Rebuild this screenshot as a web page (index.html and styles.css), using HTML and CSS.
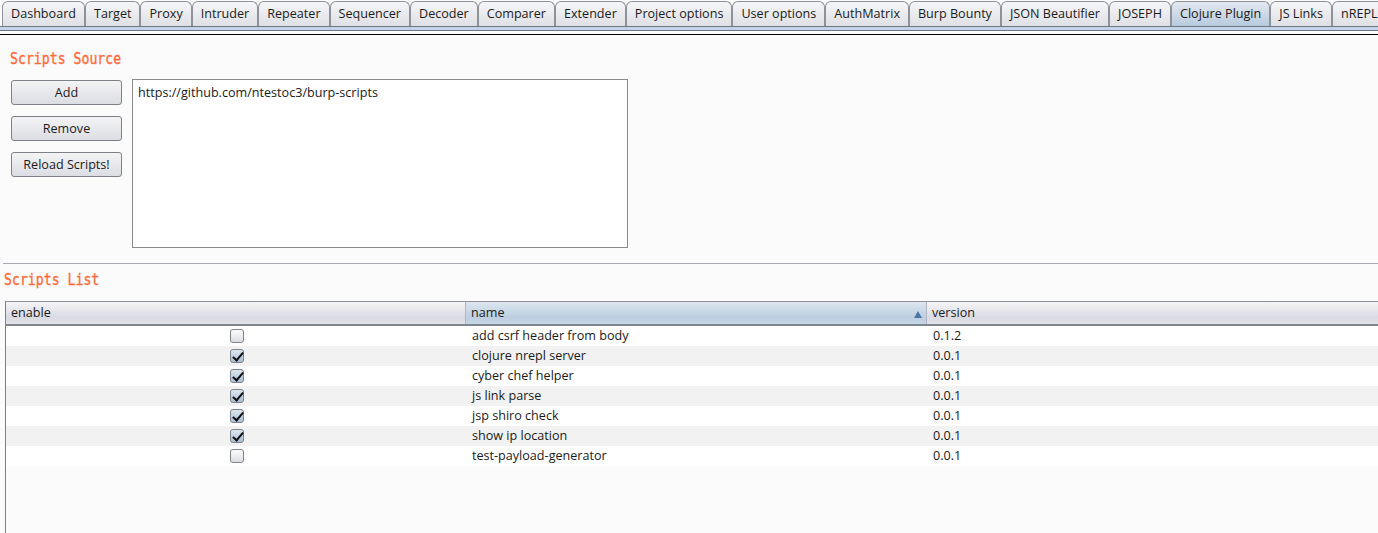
FILE: index.html
```html
<!DOCTYPE html>
<html>
<head>
<meta charset="utf-8">
<link rel="stylesheet" href="styles.css">
</head>
<body>
<div class="tabs">
  <div class="tab">Dashboard</div>
  <div class="tab">Target</div>
  <div class="tab">Proxy</div>
  <div class="tab">Intruder</div>
  <div class="tab">Repeater</div>
  <div class="tab">Sequencer</div>
  <div class="tab">Decoder</div>
  <div class="tab">Comparer</div>
  <div class="tab">Extender</div>
  <div class="tab">Project options</div>
  <div class="tab">User options</div>
  <div class="tab">AuthMatrix</div>
  <div class="tab">Burp Bounty</div>
  <div class="tab">JSON Beautifier</div>
  <div class="tab">JOSEPH</div>
  <div class="tab active">Clojure Plugin</div>
  <div class="tab">JS Links</div>
  <div class="tab">nREPL</div>
</div>
<div class="tabline"></div>
<div class="content">
  <h2 class="section-title src-title">Scripts Source</h2>
  <div class="source">
    <div class="buttons">
      <button class="btn">Add</button>
      <button class="btn">Remove</button>
      <button class="btn">Reload Scripts!</button>
    </div>
    <div class="list">https://github.com/ntestoc3/burp-scripts</div>
  </div>
  <div class="sep"></div>
  <h2 class="section-title list-title">Scripts List</h2>
  <div class="table">
    <div class="thead">
      <div class="th c-enable">enable</div>
      <div class="th c-name sorted">name<span class="tri"></span></div>
      <div class="th c-version">version</div>
    </div>
    <div class="row"><div class="td c-enable"><span class="cb"></span></div><div class="td c-name">add csrf header from body</div><div class="td c-version">0.1.2</div></div>
    <div class="row alt"><div class="td c-enable"><span class="cb on"></span></div><div class="td c-name">clojure nrepl server</div><div class="td c-version">0.0.1</div></div>
    <div class="row"><div class="td c-enable"><span class="cb on"></span></div><div class="td c-name">cyber chef helper</div><div class="td c-version">0.0.1</div></div>
    <div class="row alt"><div class="td c-enable"><span class="cb on"></span></div><div class="td c-name">js link parse</div><div class="td c-version">0.0.1</div></div>
    <div class="row"><div class="td c-enable"><span class="cb on"></span></div><div class="td c-name">jsp shiro check</div><div class="td c-version">0.0.1</div></div>
    <div class="row alt"><div class="td c-enable"><span class="cb on"></span></div><div class="td c-name">show ip location</div><div class="td c-version">0.0.1</div></div>
    <div class="row"><div class="td c-enable"><span class="cb"></span></div><div class="td c-name">test-payload-generator</div><div class="td c-version">0.0.1</div></div>
  </div>
</div>
</body>
</html>
```
FILE: styles.css
```css
* { box-sizing: border-box; }
html, body { margin: 0; padding: 0; }
body {
  width: 1378px;
  height: 533px;
  overflow: hidden;
  background: #fbfbfb;
  font-family: "Open Sans", "Noto Sans", sans-serif;
  font-size: 12.6px;
  color: #1a1a1a;
}
.tabs {
  display: flex;
  height: 26px;
  padding: 1px 0 0 2px;
  white-space: nowrap;
  overflow: hidden;
  background: #fbfbfb;
}
.tab {
  flex: none;
  height: 25px;
  line-height: 24px;
  padding: 0 8px 0 8px;
  border: 1px solid #8d929a;
  border-bottom: none;
  border-radius: 6px 6px 0 0;
  background: linear-gradient(#f6f6f8, #dfe0e5);
  color: #1b1b1b;
}
.tab.active {
  background: linear-gradient(#e3e9f0, #b7cadd);
}
.tabline {
  height: 9px;
  border-top: 1px solid #6d7684;
  background: linear-gradient(#c3d4e6 0, #c3d4e6 3px, #6d7684 3px, #6d7684 4px, #fbfbfb 4px, #fbfbfb 7px, #000 7px, #000 8px, #fbfbfb 8px);
}
.content {
  padding: 0 0 0 3px;
}
.section-title {
  margin: 0;
  font-family: "DejaVu Sans Mono", monospace;
  font-weight: normal;
  font-size: 13.2px;
  color: #ff6a3a;
  line-height: 20px;
  -webkit-text-stroke: 0.3px #ff6a3a;
  transform: scaleY(1.2);
  transform-origin: left center;
}
.src-title { padding: 13px 0 0 7px; }
.source {
  display: flex;
  gap: 10px;
  padding: 0 0 0 8px;
  margin-top: 11px;
}
.buttons {
  display: flex;
  flex-direction: column;
  gap: 11px;
  padding-top: 1px;
}
.btn {
  width: 111px;
  height: 25px;
  border: 1px solid #7d8087;
  border-radius: 3px;
  background: linear-gradient(#f4f4f6, #dcdde3);
  font-family: "Open Sans", "Noto Sans", sans-serif;
  font-size: 12.6px;
  color: #1b1b1b;
  padding: 0;
}
.list {
  width: 496px;
  height: 169px;
  border: 1px solid #8a8a8a;
  background: #fff;
  padding: 3px 0 0 5px;
  line-height: 19px;
}
.sep {
  height: 1px;
  background: #a7a9b0;
  margin-top: 15px;
}
.list-title { padding: 6px 0 0 1px; }
.table {
  margin: 11px 0 0 2px;
  border-left: 1px solid #7b8089;
  height: 240px;
}
.thead {
  display: flex;
  height: 25px;
  border-top: 1px solid #8d919a;
  border-bottom: 2px solid #7f848d;
  background: linear-gradient(#f5f5f7, #dadbe2 70%, #e2e3e8);
}
.th {
  line-height: 22px;
  padding-left: 5px;
  border-right: 1px solid #b3b6be;
  position: relative;
}
.th.sorted {
  background: linear-gradient(#dde6ef, #bccee0 70%, #c6d6e6);
}
.tri {
  position: absolute;
  right: 4px;
  top: 9px;
  width: 0;
  height: 0;
  border-left: 4px solid transparent;
  border-right: 4px solid transparent;
  border-bottom: 7px solid #4a76a6;
}
.c-enable { width: 460px; flex: none; }
.c-name { width: 461px; flex: none; }
.c-version { flex: 1; border-right: none; }
.row {
  display: flex;
  height: 20px;
  line-height: 20px;
  background: #fff;
}
.row.alt { background: #f2f2f2; }
.td.c-name, .td.c-version { padding-left: 6px; }
.td.c-enable {
  display: flex;
  align-items: center;
  justify-content: center;
}
.cb {
  display: inline-block;
  width: 14px;
  height: 14px;
  margin-left: 1px;
  border: 1px solid #7e838c;
  border-radius: 3px;
  background: linear-gradient(#fcfcfd, #dcdde2);
  position: relative;
}
.cb.on {
  background: linear-gradient(#dde6ef, #a9bfd6);
}
.cb.on::after {
  content: "";
  position: absolute;
  left: 4px;
  top: 0px;
  width: 4px;
  height: 9px;
  border-right: 2px solid #111;
  border-bottom: 2px solid #111;
  transform: rotate(40deg);
}
```
